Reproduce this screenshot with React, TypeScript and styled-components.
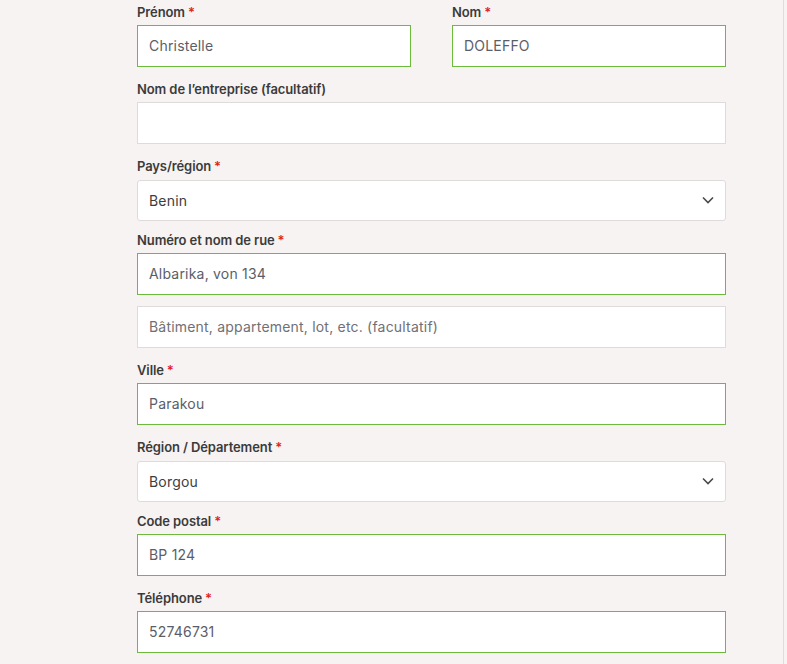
import React from "react";
import styled, { createGlobalStyle } from "styled-components";

const GlobalStyle = createGlobalStyle`
  html, body { margin: 0; padding: 0; background: #f7f3f2; }
  body { font-family: Inter, "Noto Sans", "Liberation Sans", sans-serif; }
  * { box-sizing: border-box; }
`;

const Page = styled.div`
  display: flex;
  width: 787px;
  min-height: 664px;
  background: #f7f3f2;
`;

const Content = styled.div`
  width: 784px;
  border-right: 1px solid #e1dcdb;
  padding: 3px 0 0 137px;
`;

const Form = styled.form`
  width: 589px;
  display: flex;
  flex-direction: column;
`;

const Row = styled.div`
  display: grid;
  grid-template-columns: 1fr 1fr;
  column-gap: 41px;
`;

const Field = styled.div<{ $gap?: number }>`
  display: flex;
  flex-direction: column;
  margin-bottom: ${(p) => (p.$gap ?? 13)}px;
`;

const Label = styled.label`
  font-size: 13px;
  line-height: 18px;
  font-weight: 600;
  color: #3b3b3b;
  margin-bottom: 4px;
  letter-spacing: -0.1px;
`;

const Req = styled.span`
  color: #e2231a;
  margin-left: 3px;
`;

const Input = styled.div<{ $filled?: boolean; $placeholder?: boolean }>`
  height: 42px;
  display: flex;
  align-items: center;
  padding: 0 11px 2px;
  background: #ffffff;
  border: 1px solid ${(p) => (p.$filled ? "#6cbb3c" : "#dedbda")};
  font-size: 14px;
  letter-spacing: 0.2px;
  color: ${(p) => (p.$placeholder ? "#707075" : "#5a5e69")};
`;

const Select = styled.div`
  height: 41px;
  margin-top: 1px;
  display: flex;
  align-items: center;
  justify-content: space-between;
  padding: 0 11px 1px 11px;
  background: #ffffff;
  border: 1px solid #dedbda;
  border-radius: 3px;
  font-size: 14px;
  letter-spacing: 0.2px;
  color: #3d3d3d;
`;

const Chevron = () => (
  <svg width="12" height="8" viewBox="0 0 12 8" fill="none">
    <path d="M1 1.5 L6 6.5 L11 1.5" stroke="#4a4a4a" strokeWidth="1.6" />
  </svg>
);

export default function App() {
  return (
    <>
      <GlobalStyle />
      <Page>
        <Content>
          <Form>
            <Row>
              <Field>
                <Label>Prénom<Req>*</Req></Label>
                <Input $filled>Christelle</Input>
              </Field>
              <Field>
                <Label>Nom<Req>*</Req></Label>
                <Input $filled>DOLEFFO</Input>
              </Field>
            </Row>
            <Field>
              <Label>Nom de l’entreprise (facultatif)</Label>
              <Input />
            </Field>
            <Field $gap={10}>
              <Label>Pays/région<Req>*</Req></Label>
              <Select>
                <span>Benin</span>
                <Chevron />
              </Select>
            </Field>
            <Field $gap={11}>
              <Label>Numéro et nom de rue<Req>*</Req></Label>
              <Input $filled>Albarika, von 134</Input>
            </Field>
            <Field>
              <Input $placeholder>Bâtiment, appartement, lot, etc. (facultatif)</Input>
            </Field>
            <Field>
              <Label>Ville<Req>*</Req></Label>
              <Input $filled>Parakou</Input>
            </Field>
            <Field $gap={10}>
              <Label>Région / Département<Req>*</Req></Label>
              <Select>
                <span>Borgou</span>
                <Chevron />
              </Select>
            </Field>
            <Field>
              <Label>Code postal<Req>*</Req></Label>
              <Input $filled>BP 124</Input>
            </Field>
            <Field>
              <Label>Téléphone<Req>*</Req></Label>
              <Input $filled>52746731</Input>
            </Field>
          </Form>
        </Content>
      </Page>
    </>
  );
}
